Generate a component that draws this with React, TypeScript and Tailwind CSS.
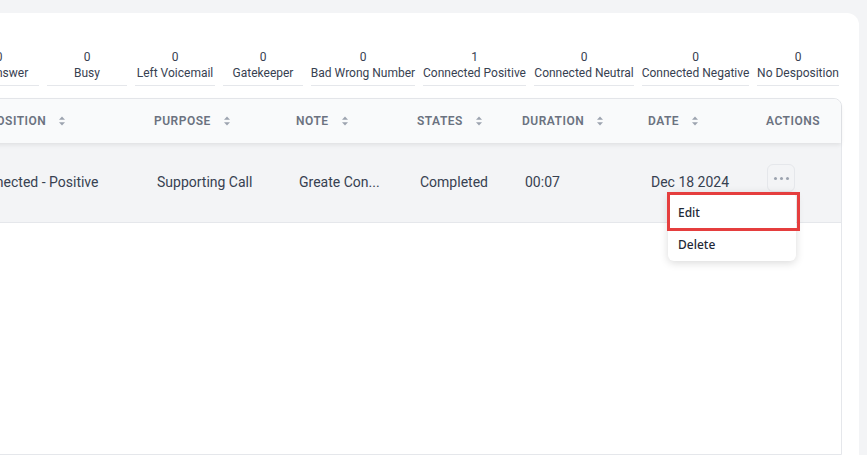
import React from "react";

const stats = [
  { n: 0, label: "No Answer", w: "w-[80px]" },
  { n: 0, label: "Busy", w: "w-[80px]" },
  { n: 0, label: "Left Voicemail", w: "w-[80px]" },
  { n: 0, label: "Gatekeeper", w: "w-[80px]" },
  { n: 0, label: "Bad Wrong Number", w: "w-[104px]" },
  { n: 1, label: "Connected Positive", w: "w-[103px]" },
  { n: 0, label: "Connected Neutral", w: "w-[100px]" },
  { n: 0, label: "Connected Negative", w: "w-[107px]" },
  { n: 0, label: "No Desposition", w: "w-[82px]" },
];

function SortIcon() {
  return (
    <svg width="8" height="12" viewBox="0 0 8 12" className="ml-[12px] shrink-0">
      <path d="M4 1.5 L7 4.8 H1 Z" fill="#9ca3af" />
      <path d="M4 10.5 L7 7.2 H1 Z" fill="#9ca3af" />
    </svg>
  );
}

const cols = [
  { key: "DISPOSITION", w: "w-[186px]", sort: true, val: "Connected - Positive" },
  { key: "PURPOSE", w: "w-[142px]", sort: true, val: "Supporting Call" },
  { key: "NOTE", w: "w-[121px]", sort: true, val: "Greate Con..." },
  { key: "STATES", w: "w-[105px]", sort: true, val: "Completed" },
  { key: "DURATION", w: "w-[126px]", sort: true, val: "00:07" },
  { key: "DATE", w: "w-[118px]", sort: true, val: "Dec 18 2024" },
];

export default function App() {
  return (
    <div
      className="w-[867px] h-[455px] bg-[#f3f4f6] overflow-hidden pt-[13px] pr-[8px]"
      style={{ fontFamily: "Roboto, 'Liberation Sans', sans-serif" }}
    >
      <div className="h-full bg-white rounded-tr-[12px] overflow-hidden flex flex-col pr-[17px]">
        {/* stats */}
        <div className="flex justify-end gap-2 pt-[36px] pr-[3px]">
          {stats.map((s) => (
            <div
              key={s.label}
              className={`${s.w} shrink-0 flex flex-col items-center border-b border-[#e5e7eb] pb-[4px] text-[12px] leading-[16px] text-[#374151] whitespace-nowrap`}
            >
              <span>{s.n}</span>
              <span>{s.label}</span>
            </div>
          ))}
        </div>

        {/* table */}
        <div className="mt-[12px] ml-[-49px] flex-1 border border-[#e5e7eb] rounded-tr-[8px] flex flex-col">
          <div className="flex h-[44px] items-center bg-[#f9fafb] rounded-tr-[8px] shadow-[0_2px_4px_rgba(0,0,0,0.08)] relative z-10">
            {cols.map((c) => (
              <div key={c.key} className={`${c.w} shrink-0 flex items-center pl-[16px]`}>
                <span className="text-[12px] font-semibold tracking-[0.5px] text-[#6b7280]">{c.key}</span>
                {c.sort && <SortIcon />}
              </div>
            ))}
            <div className="flex-1 pl-[16px] text-[12px] font-semibold tracking-[0.5px] text-[#6b7280]">
              ACTIONS
            </div>
          </div>
          <div className="flex h-[80px] items-center bg-[#f3f4f6] border-b border-[#e5e7eb]">
            {cols.map((c) => (
              <div
                key={c.key}
                className={`${c.w} shrink-0 pl-[19px] text-[14px] text-[#374151] whitespace-nowrap`}
              >
                {c.val}
              </div>
            ))}
            <div className="flex-1 pl-[17px] relative self-stretch pt-[21px]">
              <div className="relative w-[28px]">
                <button className="w-[28px] h-[28px] rounded-[6px] border border-[#e5e7eb] bg-[#f3f4f6] flex items-center justify-center gap-[3px]">
                  <span className="w-[3px] h-[3px] rounded-full bg-[#9ca3af]" />
                  <span className="w-[3px] h-[3px] rounded-full bg-[#9ca3af]" />
                  <span className="w-[3px] h-[3px] rounded-full bg-[#9ca3af]" />
                </button>
                <div
                  className="absolute top-full right-[-1px] w-[128px] bg-white rounded-[6px] shadow-[0_2px_8px_rgba(0,0,0,0.15)] z-20 text-[12px] font-medium text-[#1f2937]"
                  style={{ fontFamily: "'Noto Sans', 'Open Sans', sans-serif" }}
                >
                  <div className="relative h-[38px] flex items-center pl-[10px] pt-[3px]">
                    Edit
                    <div className="absolute left-[-1px] right-[-4px] top-0 bottom-[-1px] border-[3px] border-[#e53e3e]" />
                  </div>
                  <div className="h-[31px] flex items-center pl-[10px] pb-[2px]">Delete</div>
                </div>
              </div>
            </div>
          </div>
        </div>
      </div>
    </div>
  );
}
